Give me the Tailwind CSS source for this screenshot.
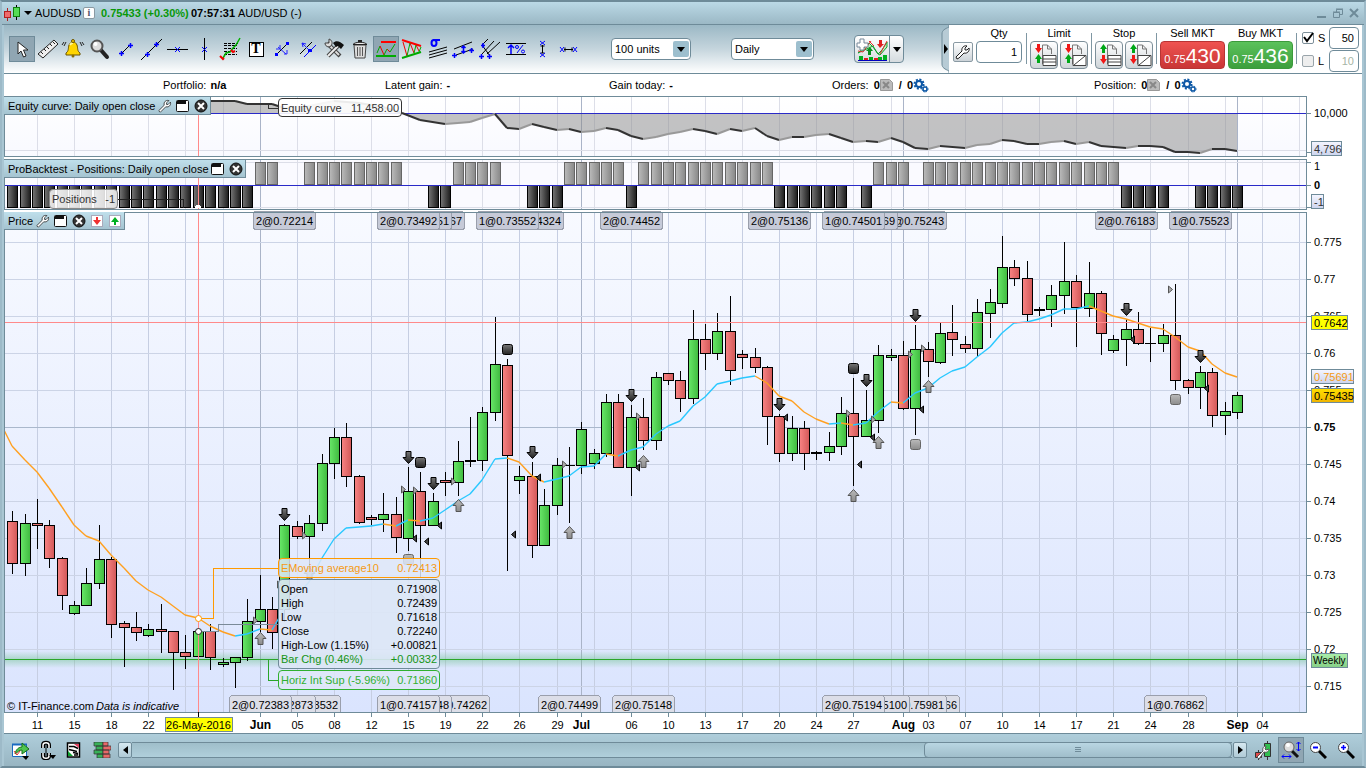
<!DOCTYPE html>
<html lang="en">
<head>
  <meta charset="UTF-8">
  <meta name="viewport" content="width=device-width, initial-scale=1.0">
  <title>AUDUSD</title>
  <script src="https://cdn.jsdelivr.net/npm/@tailwindcss/browser@4"></script>
</head>
<body class="flex h-screen flex-col overflow-hidden border-2 border-[#6e8b99] border-x-[#9dbac8] bg-[#a9c6d3] font-['Liberation_Sans',Arial,sans-serif] text-[11px] leading-[14px] text-black">

  <!-- Title bar -->
  <header class="flex h-[23px] shrink-0 items-center border-b border-[#6e8b99] bg-linear-to-b from-[#bbd9e6] to-[#9bb8c5] pl-[2px] pr-1">
    <svg class="h-[18px] w-[18px]" viewBox="0 0 18 18" shape-rendering="crispEdges">
      <path d="M3.5 4v12M12.500 1v15" stroke="#000"/>
      <path d="M3.500 4v4M3.500 14v3" stroke="#b02020"/>
      <rect x=".5" y="7.500" width="6" height="6" fill="#ef6b6b" stroke="#b02020"/>
      <rect x="9.500" y="3.500" width="6" height="9" fill="#55dd55" stroke="#108010"/>
    </svg>
    <svg class="mx-[2px] h-2 w-2" viewBox="0 0 8 8"><path d="M0 2h8L4 6z"/></svg>
    <h1 class="ml-px w-[48px]">AUDUSD</h1>
    <button aria-label="Information" class="flex h-3 w-3 items-center justify-center rounded-xs border border-[#8a9aa3] bg-white font-['Liberation_Serif',serif] text-[10px] font-bold leading-none text-[#556]">i</button>
    <span class="ml-[6px] w-[90px] font-bold text-[#089808]">0.75433 (+0.30%)</span>
    <span class="w-[47px] font-bold">07:57:31</span>
    <span>AUD/USD (-)</span>
    <div class="ml-auto flex items-center gap-1 text-[#6e8b99]">
      <button aria-label="Minimise"><svg class="h-3 w-3" viewBox="0 0 12 12" fill="none" stroke="currentColor" stroke-width="2"><path d="M1 10h9"/></svg></button>
      <button aria-label="Restore"><svg class="h-3 w-3" viewBox="0 0 12 12" fill="none" stroke="currentColor"><path d="M4.500 5V2.500h6v5H8M4 2h7" /><path d="M1.500 5.500h6v5h-6zM1 5h7"/></svg></button>
      <button aria-label="Close"><svg class="h-3 w-3" viewBox="0 0 12 12" fill="none" stroke="currentColor" stroke-width="2"><path d="M2 2l8 8M10 2l-8 8"/></svg></button>
    </div>
  </header>

  <!-- Toolbar -->
  <div class="mx-[2px] flex h-[49px] shrink-0 items-stretch border-b border-[#6e8b99] bg-linear-to-b from-[#9bb8c5] via-[#c5d5dd] to-white">
    <div class="flex items-center pl-[5px]">
      <button aria-label="Pointer" class="h-[26px] w-[26px] border border-[#6f8b99] bg-[#90a6b3]"><svg viewBox="0 0 24 24"><path d="M8 5v12l3-3 2.500 6 2.500-1-2.500-6H18z" fill="#fff" stroke="#222"/></svg></button>
      <button aria-label="Ruler" class="h-[26px] w-[26px]"><svg viewBox="0 0 26 26"><path d="M3 18L19 4l4 4L8 22z" fill="#eee" stroke="#222"/><path d="M6 16l2 2M9 13l2 2M12 11l2 2M15 8l2 2M18 6l2 2" stroke="#222"/></svg></button>
      <button aria-label="Alarm" class="h-[26px] w-[26px]"><svg viewBox="0 0 26 26"><path d="M5 17c3-2 2-5 3-8 1-2 2-3 4-3s3 1 4 3c1 3 0 6 3 8v2H5z" fill="#ffd500" stroke="#6b5400"/><path d="M9 9c1-2 2-2 3-2" stroke="#fff6a0" stroke-width="2" fill="none"/><circle cx="12" cy="20" r="1.500" fill="#8a6d00"/><circle cx="12" cy="5" r="1.500" fill="#ffd500" stroke="#6b5400"/><path d="M5 6L3 10M3 6L1 9M19 6l2 4M21 6l2 3" stroke="#222" fill="none"/></svg></button>
      <button aria-label="Magnifier" class="h-[26px] w-[26px]"><svg viewBox="0 0 26 26"><path d="M13 13l7 8" stroke="#222" stroke-width="4" stroke-linecap="round"/><circle cx="10" cy="10" r="5.500" fill="#ddd" stroke="#555" stroke-width="2"/><circle cx="8.500" cy="8" r="2" fill="#fff"/></svg></button>
      <button aria-label="Segment" class="h-[26px] w-[26px]"><svg viewBox="0 0 26 26" fill="none"><path d="M9 17l7-7" stroke="#000"/><path d="M6 17.500h5M8.500 15v5M15 9.500h5M17.500 7v5" stroke="#00f" stroke-width="1.500"/></svg></button>
      <button aria-label="Trend line" class="h-[26px] w-[26px]"><svg viewBox="0 0 26 26" fill="none"><path d="M2 24L23 3" stroke="#000"/><path d="M6 18.500h5M8.500 16v5M15 8.500h5M17.500 6v5" stroke="#00f" stroke-width="1.500"/></svg></button>
      <button aria-label="Horizontal line" class="h-[26px] w-[26px]"><svg viewBox="0 0 26 26" fill="none"><path d="M2 13.500h21" stroke="#000"/><path d="M10 11l5 5M15 11l-5 5" stroke="#00f"/></svg></button>
      <button aria-label="Vertical line" class="h-[26px] w-[26px]"><svg viewBox="0 0 26 26" fill="none"><path d="M13.500 2v22" stroke="#000"/><path d="M11 11l5 5M16 11l-5 5" stroke="#00f"/></svg></button>
      <button aria-label="Fibonacci" class="h-[26px] w-[26px]"><svg viewBox="0 0 26 26" fill="none"><path d="M7 7.500h14M7 9.500h13M7 12.500h13M7 15.500h13M7 18.500h13" stroke="#000" stroke-dasharray="3 1"/><path d="M6 22l3-5 4-1 3-4 3-3 4-7" stroke="#00b000" stroke-width="1.500"/><path d="M3 20l3 3 1-1M14 14l2 2 2-1" stroke="#e00" stroke-width="2"/></svg></button>
      <button aria-label="Text" class="flex h-[26px] w-[26px] items-center justify-center"><span class="flex h-[15px] w-[15px] items-center justify-center border border-black bg-white font-['Liberation_Serif',serif] text-[14px] font-bold">T</span></button>
      <button aria-label="Arrow segment" class="h-[26px] w-[26px]"><svg viewBox="0 0 26 26" fill="none"><path d="M7 19L19 7" stroke="#000"/><path d="M9 11l8 7M11 9v4H7M15 18h3v-4" stroke="#22f"/><path d="M6 17h3v3H6zM17 6h3v3h-3z" fill="#00f"/></svg></button>
      <button aria-label="Channel" class="h-[26px] w-[26px]"><svg viewBox="0 0 26 26" fill="none"><path d="M5 18L17 6" stroke="#000"/><path d="M9 21L21 9" stroke="#00f"/><path d="M7 7l9 9M7 7l4 1M7 7l1 4" stroke="#22f"/><path d="M13 13h4v3h-4z" fill="#00f"/></svg></button>
      <button aria-label="Tools" class="h-[26px] w-[26px]"><svg viewBox="0 0 26 26" fill="none"><path d="M6 7l13 13" stroke="#444" stroke-width="4"/><path d="M6 7l12 12" stroke="#ddd" stroke-width="2"/><path d="M7 20L18 9" stroke="#444" stroke-width="4"/><path d="M7 20L17 10" stroke="#eee" stroke-width="2"/><path d="M12 7c3-3 7-2 11 2l-3 4-3-3-2 1z" fill="#111"/><path d="M8 3v4H4c0 3 3 5 6 3 2-3 1-6-2-7z" fill="#ddd" stroke="#444"/></svg></button>
      <button aria-label="Delete" class="h-[26px] w-[26px]"><svg viewBox="0 0 26 26" fill="none"><path d="M7 9h12l-1 13H8z" fill="#ddd" stroke="#444"/><path d="M10.500 11v9M13 11v9M15.500 11v9" stroke="#555"/><path d="M6 8.500c2-3 12-3 14 0z" fill="#eee" stroke="#222"/><path d="M11 5h4" stroke="#222" stroke-width="2"/></svg></button>
      <button aria-label="Support and resistance" class="h-[26px] w-[26px] border border-[#6f8b99] bg-[#90a6b3]"><svg viewBox="0 0 24 24" fill="none"><path d="M7 5h15" stroke="#f00" stroke-width="2"/><path d="M2 19h20" stroke="#0a0" stroke-width="2"/><path d="M3 16l3-7" stroke="#0a0"/><path d="M6 9l4 9M13 12l3 3" stroke="#e00"/><path d="M10 18l3-6M16 15l5-8" stroke="#0a0"/></svg></button>
      <button aria-label="Triangle patterns" class="h-[26px] w-[26px]"><svg viewBox="0 0 26 26" fill="none"><path d="M3 4l19 6" stroke="#f00" stroke-width="2"/><path d="M3 22l19-6" stroke="#0a0" stroke-width="2"/><path d="M4 6l4 14M11 7l4 10M17 9l3 6" stroke="#e00"/><path d="M8 20l3-13M15 17l2-8M20 16l2-5" stroke="#0a0"/></svg></button>
      <button aria-label="Standard deviation" class="h-[26px] w-[26px]"><svg viewBox="0 0 26 26" fill="none"><path d="M4 16l18-5M4 19l18-5M4 22l18-5" stroke="#000"/><ellipse cx="9" cy="7" rx="2.500" ry="3" stroke="#00f" stroke-width="2"/><path d="M8 4h7" stroke="#00f" stroke-width="2"/></svg></button>
      <button aria-label="Parallel lines" class="h-[26px] w-[26px]"><svg viewBox="0 0 26 26" fill="none"><path d="M3 13l18-7M5 19l17-6" stroke="#000"/><path d="M1 19.500h5M3.500 17v5M18 14.500h5M20.500 12v5M12.500 10v7M10.500 12l2-2 2 2M10.500 15l2 2 2-2" stroke="#00f" stroke-width="1.500"/></svg></button>
      <button aria-label="Pitchfork" class="h-[26px] w-[26px]"><svg viewBox="0 0 26 26" fill="none"><path d="M5 9l8 11M4 10l7-7M5 18L17 5M10 18l13-12" stroke="#000"/><path d="M4 9.500h4M6 7v5M2 20.500h5M4.500 18v5M10 20.500h5M12.500 18v5" stroke="#00f" stroke-width="1.500"/></svg></button>
      <button aria-label="Percentage" class="h-[26px] w-[26px]"><svg viewBox="0 0 26 26" fill="none"><path d="M3 7.500h20M3 18.500h20" stroke="#000"/><path d="M8 9v9M5 12l3-3 3 3" stroke="#00f" stroke-width="1.500"/><path d="M20 9l-6 8" stroke="#00f"/><circle cx="14" cy="11" r="1.500" stroke="#00f"/><circle cx="20" cy="15.500" r="1.500" stroke="#00f"/></svg></button>
      <button aria-label="Vertical distance" class="h-[26px] w-[26px]"><svg viewBox="0 0 26 26" fill="none"><path d="M13.500 9v8M11.500 10h4M11.500 17h4" stroke="#000"/><path d="M11 5l5 4M16 5l-5 4M11 17l5 4M16 17l-5 4" stroke="#00f"/></svg></button>
      <button aria-label="Horizontal distance" class="h-[26px] w-[26px]"><svg viewBox="0 0 26 26" fill="none"><path d="M9 13.500h9M10 11.500v4M17 11.500v4" stroke="#000"/><path d="M5 11l4 5M9 11l-4 5M18 11l4 5M22 11l-4 5" stroke="#00f"/></svg></button>
    </div>

    <div class="ml-[30px] flex items-center gap-10">
      <div class="relative">
        <select aria-label="Units" class="h-[22px] w-20 appearance-none rounded border border-[#6f8b99] bg-white pl-[3px]"><option>100 units</option></select>
        <svg class="pointer-events-none absolute right-[2px] top-[3px] h-4 w-4" viewBox="0 0 16 16"><rect width="16" height="16" rx="2" fill="#9dbfce"/><path d="M4 6h8l-4 5z"/></svg>
      </div>
      <div class="relative">
        <select aria-label="Timeframe" class="h-[22px] w-[83px] appearance-none rounded border border-[#6f8b99] bg-white pl-[3px]"><option>Daily</option></select>
        <svg class="pointer-events-none absolute right-[2px] top-[3px] h-4 w-4" viewBox="0 0 16 16"><rect width="16" height="16" rx="2" fill="#9dbfce"/><path d="M4 6h8l-4 5z"/></svg>
      </div>
      <div class="flex h-7 w-[50px] rounded-sm border border-[#6f8b99] bg-linear-to-b from-white to-[#d5dbdf]">
        <button aria-label="Add indicator" class="w-[35px] border-r border-[#6f8b99]"><svg viewBox="0 0 34 26" fill="none"><path d="M3 24.500h29" stroke="#0000c0"/><path d="M4 20h4v4H4zM14 21h4v3h-4zM23 21h4v3h-4zM28 19h4v5h-4z" fill="#00b020"/><path d="M9 22h4v2H9zM19 22h4v2h-4z" fill="#e02020"/><path d="M3 17l11-10 4 4 5 7 4-4 5-8v5l-7 8-2-1-5-8z" fill="#bff0bf" stroke="#10a030"/><path d="M3 15l5 1 8-11M14 5l5 5M25 18l7-13" stroke="#e03030"/><path d="M13 19v-4h-2l4-4 3 4h-2v4z" fill="#0a9020"/><path d="M24 4v4h-2l3 4 4-4h-2V4z" fill="#e02020"/><path d="M5 3h4v4h4v4H9v3H5v-3H2V7h3z" fill="#fff" stroke="#789"/></svg></button>
        <button aria-label="More indicators" class="flex grow items-center justify-center"><svg class="h-2 w-2" viewBox="0 0 8 8"><path d="M0 2h8L4 7z"/></svg></button>
      </div>
    </div>

    <!-- Order ticket -->
    <form class="ml-auto flex items-stretch">
      <svg class="h-[48px] w-2" viewBox="0 0 8 48"><path d="M8 0v2C4 4 1 5 1 9v30c0 4 3 5 7 7v2" fill="#b7cbd5" stroke="#6f8b99"/><path d="M3 19l4 5-4 5z"/></svg>
      <div class="flex gap-[3px] bg-white pl-1 pt-px">
        <button type="button" aria-label="Order settings" class="mt-4 h-[20px] w-[20px] rounded-xs border border-[#8a9aa3] bg-linear-to-b from-white to-[#ccd3d8]"><svg viewBox="0 0 18 18"><path d="M3 16l-1-2 6-6c-1-3 2-6 5-5l-2 2v2h2l2-2c1 3-2 6-5 5l-5 5z" fill="#fff" stroke="#222"/></svg></button>
        <div class="flex flex-col items-center"><label for="qty" class="h-[15px]">Qty</label><input id="qty" value="1" class="h-[22px] w-[46px] rounded border border-[#6f8b99] bg-white pr-1 text-right"></div>
        <div class="ml-px mt-[7px] h-[31px] w-px bg-[#7f97a3]"></div>
        <div class="text-center">
          <div class="h-[15px]">Limit</div>
          <div class="flex gap-[2px]">
            <button type="button" aria-label="Limit order by quantity" class="h-7 w-7 rounded-sm border border-[#7d8f99] bg-linear-to-b from-white to-[#cfd5d9]"><svg viewBox="0 0 26 26"><path d="M11.500 22V3h5l4 4v5M16.500 3v4h4" fill="none" stroke="#777"/><path d="M12 13.500h13v10H12zM12 17h13M12 20h13" fill="#fff" stroke="#444"/><path d="M6 2h3v4h2l-3.500 5L4 6h2z" fill="#f01818"/><path d="M6 21h3v-4h2L7.500 12 4 17h2z" fill="#00a818"/></svg></button>
            <button type="button" aria-label="Limit order on chart" class="h-7 w-7 rounded-sm border border-[#7d8f99] bg-linear-to-b from-white to-[#cfd5d9]"><svg viewBox="0 0 26 26"><path d="M11.500 22V3h5l4 4v5M16.500 3v4h4" fill="none" stroke="#777"/><path d="M12 13.500h13v10H12zM13 23l11-9" fill="#fff" stroke="#444"/><path d="M6 2h3v4h2l-3.500 5L4 6h2z" fill="#f01818"/><path d="M6 21h3v-4h2L7.500 12 4 17h2z" fill="#00a818"/></svg></button>
          </div>
        </div>
        <div class="mt-[7px] h-[31px] w-px bg-[#7f97a3]"></div>
        <div class="text-center">
          <div class="h-[15px]">Stop</div>
          <div class="flex gap-[2px]">
            <button type="button" aria-label="Stop order by quantity" class="h-7 w-7 rounded-sm border border-[#7d8f99] bg-linear-to-b from-white to-[#cfd5d9]"><svg viewBox="0 0 26 26"><path d="M11.500 22V3h5l4 4v5M16.500 3v4h4" fill="none" stroke="#777"/><path d="M12 13.500h13v10H12zM12 17h13M12 20h13" fill="#fff" stroke="#444"/><path d="M6 11h3V7h2L7.500 2 4 7h2z" fill="#00a818"/><path d="M6 13h3v4h2l-3.500 5L4 17h2z" fill="#f01818"/></svg></button>
            <button type="button" aria-label="Stop order on chart" class="h-7 w-7 rounded-sm border border-[#7d8f99] bg-linear-to-b from-white to-[#cfd5d9]"><svg viewBox="0 0 26 26"><path d="M11.500 22V3h5l4 4v5M16.500 3v4h4" fill="none" stroke="#777"/><path d="M12 13.500h13v10H12zM13 23l11-9" fill="#fff" stroke="#444"/><path d="M6 11h3V7h2L7.500 2 4 7h2z" fill="#00a818"/><path d="M6 13h3v4h2l-3.500 5L4 17h2z" fill="#f01818"/></svg></button>
          </div>
        </div>
        <div class="mt-[7px] h-[31px] w-px bg-[#7f97a3]"></div>
        <div class="text-center">
          <div class="h-[15px]">Sell MKT</div>
          <button type="button" class="flex h-7 w-[65px] items-baseline justify-center rounded-sm border border-[#b83434] bg-linear-to-b from-[#ef5350] to-[#c93636] leading-[27px] text-white"><span>0.75</span><span class="text-[21px]">430</span></button>
        </div>
        <div class="text-center">
          <div class="h-[15px]">Buy MKT</div>
          <button type="button" class="flex h-7 w-[65px] items-baseline justify-center rounded-sm border border-[#3c9a3c] bg-linear-to-b from-[#5bc25b] to-[#3d9f3d] leading-[27px] text-white"><span>0.75</span><span class="text-[21px]">436</span></button>
        </div>
        <div class="mt-[7px] h-[31px] w-px bg-[#7f97a3]"></div>
        <div class="flex flex-col gap-px pl-[2px] pr-[3px] pt-px">
          <div class="flex items-center">
            <label class="relative flex w-[27px] items-center gap-1"><input type="checkbox" checked class="h-3 w-3 appearance-none rounded-xs border border-[#7d8f99] bg-white"><svg class="pointer-events-none absolute left-0 h-3 w-3" viewBox="0 0 12 12"><path d="M2 5l3 4 6-8" fill="none" stroke="#000" stroke-width="2"/></svg>S</label>
            <input aria-label="Stop distance" value="50" class="h-[22px] w-[30px] rounded border border-[#6f8b99] bg-white pr-1 text-right">
          </div>
          <div class="flex items-center">
            <label class="flex w-[27px] items-center gap-1"><input type="checkbox" class="h-3 w-3 appearance-none rounded-xs border border-[#9aa5ab] bg-[#eee]">L</label>
            <input aria-label="Limit distance" value="10" disabled class="h-[22px] w-[30px] rounded border border-[#6f8b99] bg-white pr-1 text-right text-[#a5b5a5]">
          </div>
        </div>
      </div>
    </form>
  </div>

  <!-- Account summary -->
  <div class="mx-[2px] grid h-[22px] shrink-0 grid-cols-[222fr_224fr_223fr_262fr_268fr] items-center bg-white pl-[159px]">
    <div>Portfolio: <b class="ml-px">n/a</b></div>
    <div>Latent gain: <b class="ml-px">-</b></div>
    <div>Gain today: <b class="ml-px">-</b></div>
    <div class="flex items-center">Orders:<b class="ml-[5px]">0</b>
      <svg class="mr-[6px] h-3 w-[13px]" viewBox="0 0 13 12"><path d="M.500.500h9l3 3v8H.5z" fill="#bbb" stroke="#999"/><path d="M3 3l6 6M9 3L3 9" stroke="#888" stroke-width="2"/></svg>
      <b>/</b><b class="ml-[5px]">0</b>
      <svg class="h-[15px] w-4" viewBox="0 0 16 15" fill="none" stroke="#0d58a6"><circle cx="6" cy="6" r="3" stroke-width="2"/><circle cx="6" cy="6" r="4.500" stroke-width="2" stroke-dasharray="2 1.500"/><circle cx="12" cy="11" r="2" stroke-width="1.500"/><circle cx="12" cy="11" r="3" stroke-dasharray="1.500 1"/></svg>
    </div>
    <div class="flex items-center">Position:<b class="ml-[5px]">0</b>
      <svg class="mr-[6px] h-3 w-[13px]" viewBox="0 0 13 12"><path d="M.500.500h9l3 3v8H.5z" fill="#bbb" stroke="#999"/><path d="M3 3l6 6M9 3L3 9" stroke="#888" stroke-width="2"/></svg>
      <b>/</b><b class="ml-[5px]">0</b>
      <svg class="h-[15px] w-4" viewBox="0 0 16 15" fill="none" stroke="#0d58a6"><circle cx="6" cy="6" r="3" stroke-width="2"/><circle cx="6" cy="6" r="4.500" stroke-width="2" stroke-dasharray="2 1.500"/><circle cx="12" cy="11" r="2" stroke-width="1.500"/><circle cx="12" cy="11" r="3" stroke-dasharray="1.500 1"/></svg>
    </div>
  </div>

  <!-- Charts -->
  <main class="mx-[2px] flex min-h-0 grow flex-col bg-white">
    <section class="relative h-[62px] shrink-0">
      <svg id="equity" class="block h-full w-full"></svg>
      <div class="absolute left-0 top-px flex h-[18px] items-center border-b border-r border-[#6f8b99] bg-linear-to-b from-[#bfdfeb] to-[#a5c4d1] pl-1">
        <h2 class="mr-px">Equity curve: Daily open close</h2>
        <button aria-label="Settings" class="w-[18px]"><svg class="mx-auto h-[14px] w-[14px]" viewBox="0 0 18 18"><path d="M3 17l-2-2 7-7c-1-4 2-7 6-6l-3 3v2h2l3-3c1 4-2 7-6 6l-6 6z" fill="#fff" stroke="#222"/></svg></button>
        <button aria-label="Window" class="w-[18px]"><svg class="mx-auto h-3 w-[14px]" viewBox="0 0 14 12"><rect x=".5" y=".5" width="12" height="11" rx="1" fill="#fff" stroke="#111"/><path d="M1 2.500h9" stroke="#111" stroke-width="3"/></svg></button>
        <button aria-label="Close" class="w-[18px]"><svg class="mx-auto h-[14px] w-[14px]" viewBox="0 0 14 14"><circle cx="7" cy="7" r="6" fill="#333" stroke="#111"/><path d="M4 4l6 6M10 4l-6 6" stroke="#fff" stroke-width="2"/></svg></button>
      </div>
      <div class="absolute left-[274px] top-[2px] flex h-[19px] w-[124px] items-center justify-between rounded border border-[#333] bg-white/90 px-[2px] text-[#333]"><span>Equity curve</span><span>11,458.00</span></div>
    </section>
    <section class="relative h-[53px] shrink-0">
      <svg id="positions" class="block h-full w-full"></svg>
      <div class="absolute left-0 top-[2px] flex h-[18px] items-center border-b border-r border-[#6f8b99] bg-linear-to-b from-[#bfdfeb] to-[#a5c4d1] pl-1">
        <h2>ProBacktest - Positions: Daily open close</h2>
        <button aria-label="Window" class="w-[18px]"><svg class="mx-auto h-3 w-[14px]" viewBox="0 0 14 12"><rect x=".5" y=".5" width="12" height="11" rx="1" fill="#fff" stroke="#111"/><path d="M1 2.500h9" stroke="#111" stroke-width="3"/></svg></button>
        <button aria-label="Close" class="w-[18px]"><svg class="mx-auto h-[14px] w-[14px]" viewBox="0 0 14 14"><circle cx="7" cy="7" r="6" fill="#333" stroke="#111"/><path d="M4 4l6 6M10 4l-6 6" stroke="#fff" stroke-width="2"/></svg></button>
      </div>
      <div class="absolute left-[45px] top-[31px] flex h-5 w-[69px] items-center justify-between rounded border border-[#888] bg-white/85 px-[2px] text-[#333]"><span>Positions</span><span>-1</span></div>
    </section>
    <section class="relative min-h-0 grow">
      <svg id="price" class="absolute block h-full w-full"></svg>
      <div class="absolute left-0 top-px flex h-[18px] items-center border-b border-r border-[#6f8b99] bg-linear-to-b from-[#bfdfeb] to-[#a5c4d1] pl-1">
        <h2 class="w-[26px]">Price</h2>
        <button aria-label="Settings" class="w-[18px]"><svg class="mx-auto h-[14px] w-[14px]" viewBox="0 0 18 18"><path d="M3 17l-2-2 7-7c-1-4 2-7 6-6l-3 3v2h2l3-3c1 4-2 7-6 6l-6 6z" fill="#fff" stroke="#222"/></svg></button>
        <button aria-label="Window" class="w-[18px]"><svg class="mx-auto h-3 w-[14px]" viewBox="0 0 14 12"><rect x=".5" y=".5" width="12" height="11" rx="1" fill="#fff" stroke="#111"/><path d="M1 2.500h9" stroke="#111" stroke-width="3"/></svg></button>
        <button aria-label="Close" class="w-[18px]"><svg class="mx-auto h-[14px] w-[14px]" viewBox="0 0 14 14"><circle cx="7" cy="7" r="6" fill="#333" stroke="#111"/><path d="M4 4l6 6M10 4l-6 6" stroke="#fff" stroke-width="2"/></svg></button>
        <button aria-label="Move down" class="w-[18px]"><svg class="mx-auto h-3 w-3" viewBox="0 0 12 12"><rect x=".5" y=".5" width="11" height="11" fill="#fff" stroke="#aab"/><path d="M5 2h2v3h3l-4 5-4-5h3z" fill="#f03030"/></svg></button>
        <button aria-label="Move up" class="w-[18px]"><svg class="mx-auto h-3 w-3" viewBox="0 0 12 12"><rect x=".5" y=".5" width="11" height="11" fill="#fff" stroke="#aab"/><path d="M5 10h2V7h3L6 2 2 7h3z" fill="#00b020"/></svg></button>
      </div>
      <div class="absolute left-[274px] top-[347px] flex w-[162px] flex-col gap-px">
        <div class="flex h-5 items-center justify-between rounded border border-[#ff9a00] bg-[#dfe7f8]/85 px-[2px] text-[#f59a14]"><span>EMoving average10</span><span>0.72413</span></div>
        <dl class="grid h-[90px] grid-cols-[1fr_auto] content-start rounded border border-[#6f8b99] bg-[#dde7f6]/90 px-[2px] pt-[2px]">
          <dt>Open</dt><dd class="text-right">0.71908</dd>
          <dt>High</dt><dd class="text-right">0.72439</dd>
          <dt>Low</dt><dd class="text-right">0.71618</dd>
          <dt>Close</dt><dd class="text-right">0.72240</dd>
          <dt>High-Low (1.15%)</dt><dd class="text-right">+0.00821</dd>
          <dt class="text-[#159415]">Bar Chg (0.46%)</dt><dd class="text-right text-[#159415]">+0.00332</dd>
        </dl>
        <div class="flex h-5 items-center justify-between rounded border border-[#30b030] bg-[#dfe7f8]/85 px-[2px] text-[#30b030]"><span>Horiz Int Sup (-5.96%)</span><span>0.71860</span></div>
      </div>
    </section>
  </main>

  <!-- Bottom bar -->
  <footer class="mx-[2px] flex h-[33px] shrink-0 items-center border-t border-[#6e8b99] bg-linear-to-b from-[#afcedb] to-[#98b5c2] pl-[2px] pr-[2px]">
    <button aria-label="Export" class="w-[27px]"><svg class="mx-auto h-5 w-5" viewBox="0 0 20 20"><path d="M2.500 4.500h14v12h-14z" fill="#fff" stroke="#1a6ac0"/><path d="M2 4.500h15" stroke="#1a6ac0" stroke-width="2"/><path d="M5 14c1-5 4-7 7-7V3l7 6-7 5v-4c-3 0-4 2-7 4z" fill="#4fc44f" stroke="#176f17"/><path d="M4 11l3 4 3-4" stroke="#e03030" fill="none"/><path d="M12 16h7l-3 4z"/></svg></button>
    <button aria-label="Link" class="w-[27px]"><svg class="mx-auto h-5 w-5" viewBox="0 0 20 20" fill="none"><path d="M6 8V5c0-3 6-3 6 0v3M6 13v3c0 3 6 3 6 0v-3" stroke="#000" stroke-width="4"/><path d="M6 8V5c0-3 6-3 6 0v3M6 13v3c0 3 6 3 6 0v-3" stroke="#fff" stroke-width="1.500"/><path d="M9 5v11" stroke="#000"/><path d="M12 15h7l-3 4z" fill="#000"/></svg></button>
    <button aria-label="Report" class="w-[28px]"><svg class="mx-auto h-4 w-4" viewBox="0 0 16 16"><rect x="1.500" y="1" width="12" height="14" fill="#fff" stroke="#000" stroke-width="1.500"/><path d="M3 4.500h5l4 2M3 7.500l8 2M7 10.500l5 1M8 13h4" stroke="#000" fill="none" stroke-width="1.500"/><path d="M8 2h5v4z" fill="#e04060"/><path d="M2 9v5h5z" fill="#10a030"/></svg></button>
    <button aria-label="Order book" class="w-[27px]"><svg class="mx-auto h-4 w-[18px]" viewBox="0 0 18 16" stroke="#333" stroke-width=".7"><path d="M1 0h9v4H1zM3 4h7v4H3zM1 8h9v4H1zM4 12h6v4H4z" fill="#38b058"/><path d="M10 0h5v4h-5zM10 4h8v4h-8zM10 8h6v4h-6zM10 12h7v4h-7z" fill="#e86868"/></svg></button>
    <button aria-label="Scroll left" class="ml-[3px] flex h-4 w-[14px] items-center justify-center rounded-xs border border-[#6f8b99] bg-linear-to-b from-[#d5e8f0] to-[#b0cbd7]"><svg class="h-2 w-[5px]" viewBox="0 0 5 8"><path d="M5 0v8L0 4z"/></svg></button>
    <div class="flex h-4 grow justify-end border-y border-[#6f8b99] bg-linear-to-b from-[#9fbeca] to-[#b0cfdb]">
      <button aria-label="Scroll position" class="-my-px flex w-[28%] items-center justify-center rounded border border-[#6f8b99] bg-linear-to-b from-[#b9d6e2] to-[#a0becb]"><svg class="h-[6px] w-[6px]" viewBox="0 0 6 6" stroke="#6f8b99"><path d="M0 .5h6M0 2.500h6M0 4.500h6"/></svg></button>
    </div>
    <button aria-label="Scroll right" class="ml-px flex h-4 w-[14px] items-center justify-center rounded-xs border border-[#6f8b99] bg-linear-to-b from-[#d5e8f0] to-[#b0cbd7]"><svg class="h-2 w-[5px]" viewBox="0 0 5 8"><path d="M0 0v8l5-4z"/></svg></button>
    <button aria-label="Chart settings" class="w-[31px]"><svg class="mx-auto h-[19px] w-4" viewBox="0 0 16 19"><path d="M3.500 9v10M12.500 0v19" stroke="#333"/><path d="M.500 11.500h6v5h-6z" fill="#e04848" stroke="#333"/><path d="M9.500 2.500h6v13h-6z" fill="#30c050" stroke="#333"/><path d="M2 16l6-6c-1-3 1-5 3-5l-1 3 1 1 3-1c0 2-2 4-5 3l-5 7z" fill="#fff" stroke="#555"/></svg></button>
    <button aria-label="Fit" class="h-[26px] w-[26px] border border-[#6f8b99] bg-[#90a6b3]"><svg viewBox="0 0 24 24" fill="none"><path d="M13 13l6 6" stroke="#111" stroke-width="3"/><circle cx="10" cy="9" r="5" fill="#ddd" stroke="#666"/><circle cx="9" cy="7" r="2" fill="#fff"/><path d="M19.500 4v9M17.500 6l2-2 2 2M17.500 11l2 2 2-2M3 18.500h9M5 16.500l-2 2 2 2M10 16.500l2 2-2 2" stroke="#00f"/></svg></button>
    <button aria-label="Zoom out" class="w-[28px]"><svg class="mx-auto h-[18px] w-[18px]" viewBox="0 0 18 18" fill="none"><path d="M10 10l7 7" stroke="#000" stroke-width="3"/><circle cx="6.500" cy="6.500" r="5" fill="#fff" stroke="#444"/><path d="M4 6.500h5" stroke="#00f" stroke-width="2"/></svg></button>
    <button aria-label="Zoom in" class="w-[28px]"><svg class="mx-auto h-[18px] w-[18px]" viewBox="0 0 18 18" fill="none"><path d="M10 10l7 7" stroke="#000" stroke-width="3"/><circle cx="6.500" cy="6.500" r="5" fill="#fff" stroke="#444"/><path d="M4 6.500h5M6.500 4v5" stroke="#00f" stroke-width="1.500"/></svg></button>
  </footer>

  <script>
    // direction, body top, body bottom, high, low - in plot units, 37 units per 0.005
    const candles = [
      ['R',521,564,511,574],['G',523,564,514,576],['R',523,526,499,549],['R',525,559,520,568],['R',558,596,557,610],
      ['G',605,614,601,615],['G',583,606,568,606],['G',559,584,525,589],['R',559,625,557,638],['R',623,628,621,667],
      ['R',627,633,612,641],['G',629,636,624,637],['R',629,632,604,653],['R',631,653,631,690],['R',652,657,635,669],
      ['G',631,657,618,678],['R',631,658,624,670],['G',662,665,658,667],['G',657,663,657,688],['G',621,658,599,661],
      ['G',609,622,575,632],['R',609,633,597,649],['G',525,610,524,622],['R',526,537,521,539],['G',523,537,515,578],
      ['G',463,524,454,531],['G',437,464,428,479],['R',437,477,423,487],['R',476,523,475,524],['R',517,520,515,525],
      ['G',514,520,493,532],['R',514,538,497,553],['G',491,539,467,551],['R',491,526,472,578],['G',501,526,493,526],
      ['R',480,483,472,496],['G',461,483,441,496],['D',460,462,417,467],['G',412,461,407,471],['G',364,413,317,421],
      ['R',365,456,359,571],['G',476,481,466,494],['R',476,546,462,558],['G',505,546,489,546],['G',465,506,458,515],
      ['D',465,466,447,523],['G',429,466,422,474],['G',453,464,449,469],['G',402,454,394,457],['R',402,468,394,468],
      ['G',417,468,405,496],['R',417,441,398,450],['G',377,441,372,450],['R',373,381,373,385],['R',380,399,371,412],
      ['G',339,399,310,404],['R',339,354,324,370],['G',331,354,313,360],['R',331,371,296,385],['R',354,358,350,369],
      ['R',357,368,348,373],['R',367,417,366,445],['R',416,454,414,462],['G',428,454,416,461],['R',428,454,421,470],
      ['D',452,454,451,460],['G',446,453,432,461],['G',413,447,397,455],['R',413,437,378,486],['G',420,437,390,437],
      ['G',355,421,345,433],['G',355,358,349,361],['R',355,409,341,410],['G',349,409,325,435],['R',349,362,342,377],
      ['G',333,363,323,364],['R',332,340,305,356],['R',344,349,336,353],['G',312,349,299,357],['G',302,314,289,338],
      ['G',267,304,236,308],['R',267,279,260,286],['R',278,315,261,321],['D',309,311,307,316],['G',295,310,285,327],
      ['G',281,296,242,314],['R',281,308,275,347],['G',293,309,262,317],['R',293,334,291,355],['G',339,351,335,353],
      ['G',329,340,319,366],['R',329,344,312,345],['D',343,344,328,362],['G',335,344,324,352],['R',335,381,284,390],
      ['R',380,388,379,394],['G',372,388,366,409],['R',372,416,368,427],['G',411,416,402,435],['G',395,413,392,419]
    ];
    const ema = [446,460,472,488,507,525,536,541,555,568,581,590,597,606,615,618,626,632,636,634,629,630,609,595,582,558,539,528,527,526,524,
      526,520,521,518,510,501,494,480,459,458,462,476,482,479,476,467,466,454,456,450,447,434,426,421,406,397,384,381,378,376,
      383,396,401,412,419,424,423,425,423,412,402,403,393,388,378,371,367,357,347,333,323,322,319,315,309,309,306,
      311,316,319,323,327,329,337,347,351,364,373,377];
    // equity points as [bar, y]
    const equity = [[16,101],[18,101],[19,104],[21,104],[22,108],[24,106],[26,101],[28,103],[30,107],[31.500,113],[33,120],[35,124],[36,123],[37,122],[38,118],[39,114],
      [40,128],[41,129],[42,124],[43,127],[44,130],[45,129],[46,132],[47,131],[48,128],[49,130],[50,136],[51,139],[52,137],[53,134],[54,132],[55,129],[56,131],
      [57,134],[58,129],[59,131],[60,128],[61,136],[62,140],[63,137],[64,137],[65,135],[66,134],[67,138],[68,142],[69,141],[70,142],[71,138],[72,142],[73,148],[74,149],
      [75,146],[77,148],[78,145],[79,144],[80,140],[81,141],[82,144],[83,144],[84,142],[85,141],[86,144],[87,142],[88,146],[90,148],[91,146],[92,146],[93,147],[94,152],
      [95,152],[96,153],[97,149],[98,149],[99,151]];
    const longs = [[20,21],[24,31],[36,39],[45,49],[51,61],[70,72],[74,89]];
    const shorts = [[0,19],[34,35],[42,44],[50,50],[62,67],[69,69],[90,93],[96,99]];
    const topTags = [[22,'2@0.72214'],[32,'2@0.73492'],[33,'1@0.73151'],[34,'2@0.74167'],[40,'1@0.73552'],[42,'1@0.74324'],[50,'2@0.74452'],
      [62,'2@0.75136'],[68,'1@0.74501'],[69,'1@0.74669'],[73,'2@0.75243'],[90,'2@0.76183'],[96,'1@0.75523']];
    const bottomTags = [[20,'2@0.72383'],[22,'2@0.72873'],[24,'2@0.73532'],[32,'1@0.74157'],[33,'1@0.73748'],[36,'2@0.74262'],[45,'2@0.74499'],
      [51,'2@0.75148'],[68,'2@0.75194'],[70,'2@0.75100'],[73,'1@0.75981'],[74,'2@0.75966'],[94,'1@0.76862']];
    const months = { 20: 'Jun', 46: 'Jul', 72: 'Aug', 99: 'Sep' };
    const days = { 2:'11',5:'15',8:'18',11:'22',23:'05',26:'08',29:'12',32:'15',35:'19',38:'22',41:'26',44:'29',50:'06',53:'10',56:'13',59:'17',62:'20',
      65:'24',68:'27',74:'03',77:'07',80:'10',83:'14',86:'17',89:'21',92:'24',95:'28',101:'04' };
    const downArrows = [[22,508],[32,451],[34,477],[42,446],[50,389],[62,398],[69,374],[73,309],[90,303],[96,350]];
    const upArrows = [[20,632],[24,567],[33,593],[36,499],[45,526],[51,455],[68,489],[70,436],[74,380]];
    const darkSquares = [[33,462],[40,349],[68,368]];
    const greySquares = [[32,559],[73,444],[94,399]];
    // [bar, y] of the entry marks (left of the bar) and exit marks (right of the bar)
    const entries = [[20,620],[24,535],[22,584],[32,489],[33,490],[36,481],[45,464],[51,416],[68,413],[70,419],[73,354],[74,348],[94,289]];
    const exits = [[32,538],[33,541],[34,525],[40,534],[42,477],[50,467],[62,417],[68,464],[69,437],[73,409],[90,339],[96,388]];

    const AXIS = 55;
    const line = (x1, y1, x2, y2, c, w = 1) => `<path d="M${x1} ${y1}L${x2} ${y2}" stroke="${c}" stroke-width="${w}" fill="none"/>`;
    const rect = (x, y, w, h, fill, stroke = 'none', r = 0) => `<rect x="${x}" y="${y}" width="${w}" height="${h}" rx="${r}" fill="${fill}" stroke="${stroke}"/>`;
    const text = (x, y, s, extra = '') => `<text x="${x}" y="${y}" ${extra}>${s}</text>`;
    const gradient = (id, a, b, horizontal) => `<linearGradient id="${id}" ${horizontal ? '' : 'x2="0" y2="1"'}><stop stop-color="${a}"/><stop offset="1" stop-color="${b}"/></linearGradient>`;

    const svgs = ['equity', 'positions', 'price'].map(id => document.getElementById(id));

    function draw() {
      const W = svgs[0].clientWidth;
      const P = W - AXIS - 1;
      const k = P / 1302;
      const X = i => Math.round((8.2 + 12.372 * i) * k);
      const gridX = (y1, y2, c) => {
        let s = '';
        for (let i = 2; i < 105; i += 3) if (i !== 20) s += line(X(i) + .5, y1, X(i) + .5, y2, c);
        for (const i in months) s += line(X(+i) + .5, y1, X(+i) + .5, y2, '#aab4c8');
        return s;
      };
      const frame = (y, h) => rect(.5, y + .5, P, h, 'none', '#6f8b99');
      const tick = y => line(P + 1, y + .5, P + 5, y + .5, '#6f8b99');
      const axisTag = (y, w, s, fill, color) => rect(P + 5.5, y + .5, w, 14, fill, '#6f8b99') + text(P + 8, y + 12, s, `fill="${color}"`);

      // equity
      const E = y => y - 96;
      const pts = equity.map(([i, y]) => [X(i), E(y)]);
      const last = pts[pts.length - 1][0];
      let s = '<defs>' + gradient('bgE', '#ffffff', '#f8f9ff') + gradient('tagE', '#f5f6ff', '#ccd4ee') + '</defs>';
      s += rect(0, 1, P, 60, 'url(#bgE)') + gridX(1, 60, '#dcdee8') + line(0, E(150) + .5, P, E(150) + .5, '#dcdee8');
      s += `<path d="M${pts[0][0]} ${E(113)}L${pts.map(p => p.join(' ')).join('L')}L${last} ${E(113)}z" fill="#888" fill-opacity=".5"/>`;
      s += line(0, E(113) + .5, P, E(113) + .5, '#2a2ac8');
      s += '<g shape-rendering="auto">';
      for (let j = 1; j < pts.length; j++) {
        s += line(...pts[j - 1], ...pts[j], pts[j][1] < pts[j - 1][1] ? '#999' : '#333', 2);
      }
      s += '</g><path d="M264.500 8v4.500h10" stroke="#333" fill="none"/>';
      s += line(X(15) + .5, 1, X(15) + .5, 60, '#ff8a8a') + frame(0, 60) + tick(E(113)) + tick(E(152));
      s += text(P + 8, 21, '10,000') + axisTag(E(141), 30, '4,796', 'url(#tagE)', '#333');
      svgs[0].innerHTML = s;

      // positions
      s = '<defs>' + gradient('lng', '#bbb', '#888', 1) + gradient('sht', '#777', '#1c1c1c', 1) + '</defs>';
      s += rect(0, 2, P, 49, '#fafaff') + gridX(2, 51, '#dcdee8') + line(0, 4.500, P, 4.500, '#dcdee8') + line(0, 49.500, P, 49.500, '#dcdee8');
      longs.forEach(([a, b]) => { for (let i = a; i <= b; i++) s += rect(X(i) - 4.500, 4.500, 10, 22, 'url(#lng)', '#666'); });
      shorts.forEach(([a, b]) => { for (let i = a; i <= b; i++) s += rect(X(i) - 4.500, 27.500, 10, 22, 'url(#sht)', '#000'); });
      s += line(0, 27.500, P, 27.500, '#2a2ac8') + '<path d="M114 41.500h65.500v8" stroke="#222" fill="none"/>';
      s += line(X(15) + .5, 2, X(15) + .5, 51, '#ff8a8a') + `<path d="M${X(15) - 3} 50a3 3 0 0 1 6 0z" fill="#fff"/>` + frame(1, 50) + tick(4) + tick(27) + tick(49);
      s += text(P + 8, 12, '1') + text(P + 8, 31, '0', 'font-weight="bold"') + axisTag(36, 12, '-1', 'url(#tagE)', '#333');
      svgs[1].innerHTML = s;

      // price
      const H = svgs[2].clientHeight;
      const B = H - 21;
      const ky = B / 501;
      const Y = y => Math.round((y - 211) * ky);
      s = '<defs>' + gradient('bgP', '#f8faff', '#dae4fe') + gradient('up', '#68e868', '#3fba3f', 1) + gradient('down', '#f88484', '#d25858', 1)
        + gradient('dark', '#777', '#222') + gradient('grey', '#bbb', '#8c8c8c')
        + gradient('gold', '#ffe000', '#f0b400') + gradient('wk', '#aaeeaa', '#86cf86')
        + '<linearGradient id="halo" x2="0" y2="1"><stop stop-color="#6abf8a" stop-opacity="0"/><stop offset=".5" stop-color="#6abf8a" stop-opacity=".45"/><stop offset="1" stop-color="#6abf8a" stop-opacity="0"/></linearGradient></defs>';
      s += rect(0, 1, P, B - 1, 'url(#bgP)') + gridX(1, B, '#c6cee2');
      for (let n = 0; n < 13; n++) {
        const y = Y(242 + 37 * n) + .5;
        s += line(0, y, P, y, n === 5 ? '#aab8cc' : '#ccd4e6') + line(P + 1, y, P + 5, y, '#6f8b99');
        const v = String(+(0.775 - n * 0.005).toFixed(3));
        s += text(P + 8, y + 3.500, v, n === 5 ? 'font-weight="bold"' : '');
      }
      s += rect(0, Y(659) - 8, P, 17, 'url(#halo)') + line(0, Y(659) + .5, P, Y(659) + .5, '#2aa52a');
      candles.forEach(([d, top, bottom, high, low], i) => {
        const x = X(i);
        s += line(x + .5, Y(high), x + .5, Y(low), '#000');
        if (d === 'D') s += rect(x - 5, Y(top), 11, Math.max(1, Y(bottom) - Y(top)), '#000');
        else s += rect(x - 4.500, Y(top) + .5, 10, Math.max(1, Y(bottom) - Y(top) - 1), d === 'G' ? 'url(#up)' : 'url(#down)', '#000');
      });
      const emaPts = [[0, Y(430)]].concat(ema.map((y, i) => [X(i), Y(y)]));
      s += '<g shape-rendering="auto">';
      for (let j = 1; j < emaPts.length; j++) {
        s += line(...emaPts[j - 1], ...emaPts[j], emaPts[j][1] > emaPts[j - 1][1] ? '#ffa020' : '#28c8ff', 1.400);
      }
      entries.forEach(([i, y]) => { s += `<path d="M${X(i) - 6.500} ${Y(y) - 3}v7l4-3.500z" fill="#aaa" stroke="#555"/>`; });
      exits.forEach(([i, y]) => { s += `<path d="M${X(i) + 8.500} ${Y(y) - 3}v7l-4-3.500z" fill="#444" stroke="#000"/>`; });
      downArrows.forEach(([i, y]) => { s += `<path d="M${X(i) - 2} ${Y(y) + .5}h5v6h3l-5.500 6-5.500-6h3z" fill="url(#dark)" stroke="#000"/>`; });
      upArrows.forEach(([i, y]) => { s += `<path d="M${X(i) - 2} ${Y(y) + 12.500}h5v-6h3l-5.500-6-5.500 6h3z" fill="url(#grey)" stroke="#555"/>`; });
      darkSquares.forEach(([i, y]) => { s += rect(X(i) - 4.500, Y(y) - 4.500, 10, 10, 'url(#dark)', '#000', 2); });
      greySquares.forEach(([i, y]) => { s += rect(X(i) - 4.500, Y(y) - 4.500, 10, 10, 'url(#grey)', '#666', 2); });
      s += '</g>';
      // crosshair and its readout leaders
      const cx = X(15) + .5;
      s += line(cx, 1, cx, B, '#ff8a8a') + line(0, Y(322) + .5, P, Y(322) + .5, '#ff8a8a');
      s += `<path d="M${cx} ${Y(618) + .5}H${cx + 15}V357.500H274" stroke="#ff9a00" fill="none"/><path d="M${cx} ${Y(631) + .5}H${cx + 20}V${Y(624) + .5}H274" stroke="#7a8a98" fill="none"/>`;
      s += `<path d="M264.500 ${Y(659)}V469.500H274" stroke="#2aa52a" fill="none"/>`;
      s += `<g shape-rendering="auto"><circle cx="${cx}" cy="${Y(618) + .5}" r="3" fill="#fff" stroke="#ff9a00"/><circle cx="${cx}" cy="${Y(631) + .5}" r="3" fill="#fff" stroke="#222"/></g>`;
      const tag = (i, t, y, fill) => rect(X(i) - 30.500, y, 62, 18, fill, '#9a9fac', 3) + text(X(i) + .5, y < 5 ? 14 : y + 13, t, 'text-anchor="middle"');
      [...topTags].reverse().forEach(([i, t]) => { s += tag(i, t, .5, '#c6cad8'); });
      [...bottomTags].reverse().forEach(([i, t]) => { s += tag(i, t, B - 16.500, '#dcdee8'); });
      s += rect(0, B + 1, W, 20, '#fff') + frame(1, B - 1);
      s += text(3, B - 2, '© IT-Finance.com') + text(92, B - 2, 'Data is indicative', 'font-style="italic"');
      for (const i in days) s += line(X(+i) + .5, B, X(+i) + .5, B + 5, '#6f8b99') + text(X(+i) + .5, B + 17, days[i], 'text-anchor="middle"');
      for (const i in months) s += line(X(+i) + .5, B, X(+i) + .5, B + 5, '#6f8b99') + text(X(+i) + .5, B + 17, months[i], 'text-anchor="middle" font-weight="bold" font-size="12"');
      s += line(cx, B, cx, B + 5, '#000') + rect(cx - 33, B + 5.500, 67, 14, '#ffff00', '#6f8b99') + text(cx, B + 17, '26-May-2016', 'text-anchor="middle"');
      s += axisTag(Y(315), 36, '0.7642', '#ffff00', '#000') + axisTag(Y(369), 42, '0.75691', 'url(#tagE)', '#f59a14');
      s += axisTag(Y(388), 42, '0.75435', 'url(#gold)', '#000') + axisTag(Y(653), 36, '', 'url(#wk)', '#000') + text(P + 7, Y(653) + 11, 'Weekly', 'font-size="10"');
      svgs[2].innerHTML = s;
      svgs.forEach(el => el.setAttribute('shape-rendering', 'crispEdges'));
    }
    new ResizeObserver(draw).observe(svgs[2]);
    window.addEventListener('load', draw);
  </script>
</body>
</html>
